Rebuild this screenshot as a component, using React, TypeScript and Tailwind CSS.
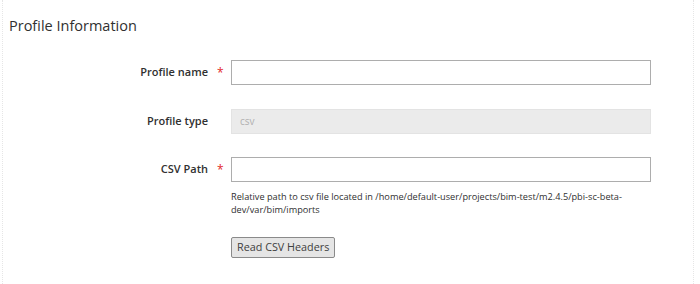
import React from 'react'

const font = { fontFamily: '"Open Sans", "Noto Sans", sans-serif' }

function Field({ label, required, className, children }: { label: string; required?: boolean; className?: string; children: React.ReactNode }) {
  return (
    <div className={'flex items-start ' + (className ?? '')}>
      <div className="w-[230px] shrink-0 flex justify-end pr-[7px] h-[25px] items-center">
        <span className="text-[11px] font-semibold text-[#303030]">{label}</span>
        <span className="w-[7px] ml-[9px] text-[12px] text-[#e22626]">{required ? '*' : ''}</span>
      </div>
      <div className="w-[420px]">{children}</div>
    </div>
  )
}

export default function App() {
  return (
    <div style={font} className="w-[700px] h-[284px] bg-white overflow-hidden">
      <div className="ml-[2px] w-[692px] h-full border-l border-r border-dotted border-[#e6e6e6] pl-[6px]">
        <h2 className="pt-[16px] text-[14.5px] text-[#303030] leading-[20px]">Profile Information</h2>

        <div className="-ml-[8px] mt-[24px] flex flex-col">
          <Field label="Profile name" required>
            <input className="w-full h-[25px] border border-[#adadad] bg-white" />
          </Field>

          <Field label="Profile type" className="mt-[24px]">
            <div className="w-full h-[25px] border border-[#e3e3e3] bg-[#ebebeb] text-[10px] text-[#b0b0b0] px-[8px] flex items-center">
              csv
            </div>
          </Field>

          <Field label="CSV Path" required className="mt-[23px]">
            <input className="w-full h-[25px] border border-[#adadad] bg-white" />
            <p className="mt-[8px] text-[9.2px] leading-[13px] text-[#303030] w-[415px]">
              Relative path to csv file located in /home/default-user/projects/bim-test/m2.4.5/pbi-sc-beta-dev/var/bim/imports
            </p>
            <button className="mt-[21px] h-[21px] px-[5px] border border-[#8a8a8a] rounded-[2px] bg-[#e5e5e5] text-[10.8px] text-[#404040] leading-none">
              Read CSV Headers
            </button>
          </Field>
        </div>
      </div>
    </div>
  )
}
